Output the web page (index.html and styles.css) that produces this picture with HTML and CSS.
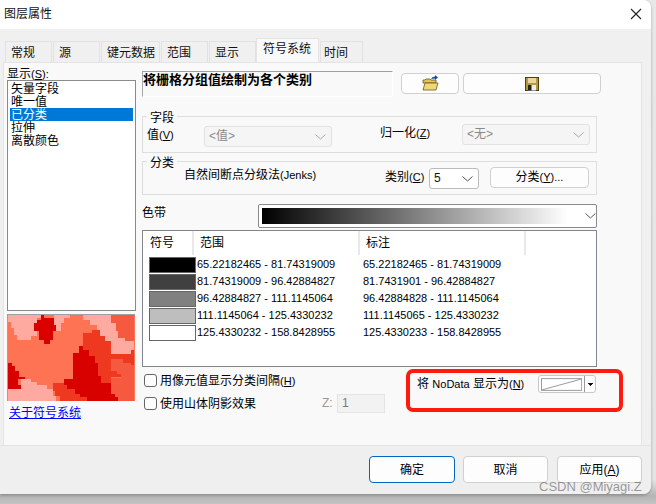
FILE: index.html
```html
<!DOCTYPE html>
<html lang="zh">
<head>
<meta charset="utf-8">
<title>图层属性</title>
<link rel="stylesheet" href="styles.css">
</head>
<body>
<div class="dialog">
  <header class="titlebar">
    <span>图层属性</span>
    <svg class="close" width="12" height="12" viewBox="0 0 12 12"><path d="M1 1L11 11M11 1L1 11" stroke="#222" stroke-width="1.1" fill="none"/></svg>
  </header>
  <nav class="tabs">
    <span class="tab w47">常规</span><span class="tab w47">源</span><span class="tab w59">键元数据</span><span class="tab w47">范围</span><span class="tab w47">显示</span><span class="tab active">符号系统</span><span class="tab w43">时间</span>
  </nav>
  <main class="panel">
    <aside class="left">
      <div class="show-label">显示<span class="lat">(<u>S</u>):</span></div>
      <div class="listbox">
        <div class="item">矢量字段</div>
        <div class="item">唯一值</div>
        <div class="item selected">已分类</div>
        <div class="item">拉伸</div>
        <div class="item">离散颜色</div>
      </div>
      <svg class="preview" width="128" height="87" viewBox="22 45 384 261" shape-rendering="crispEdges">
        <rect x="22" y="45" width="384" height="261" fill="#ff7355"/>
        <path fill="#ffaaa0" d="M22 45H120V55H110V70H100V95H110V110H90V120H50V105H40V85H30V65H22Z"/>
        <path fill="#ffaaa0" d="M160 45H210V55H190V70H182V95H168V75H160Z"/>
        <path fill="#ffaaa0" d="M22 270H62V258H60V240H90V248H110V258H140V270H158V290H168V305H22Z"/>
        <path fill="#ffaaa0" d="M250 45H335V70H348V95H355V115H375V125H405V155H395V162H335V125H315V110H300V92H290V75H270V60H250Z"/>
        <path fill="#f55a40" d="M335 45H405V125H375V115H355V95H348V70H335Z"/>
        <path fill="#f55a40" d="M335 170H365V180H395V198H405V305H355V295H345V285H335V235H365V225H352V215H335Z"/>
        <path fill="#ee3820" d="M250 100H275V92H300V110H315V125H335V215H352V225H365V232H335V285H305V250H295V190H285V170H268V150H250Z"/>
        <path fill="#ee3820" d="M335 162H395V152H405V198H395V190H370V180H335Z"/>
        <path fill="#ee3820" d="M158 250H190V258H200V270H225V285H240V295H260V305H180V290H165V275H158Z"/>
        <path fill="#d90000" d="M120 45H130V55H160V75H168V95H158V120H150V132H130V120H115V95H100V70H110V60H120Z"/>
        <path fill="#d90000" d="M250 130V150H268V170H285V190H295V230H305V250H335V285H345V295H355V305H260V295H240V285H225V270H200V258H190V240H218V160H237V140H250Z"/>
        <path fill="#d90000" d="M22 192H32V200H42V215H55V232H72V240H52V258H62V270H22Z"/>
      </svg>
      <a class="about" href="#">关于符号系统</a>
    </aside>
    <section class="right">
      <div class="top-row">
        <div class="desc">将栅格分组值绘制为各个类别</div>
        <button class="btn btn-open">
          <svg width="17" height="17" viewBox="0 0 17 17"><path d="M1 5H3L4 4H8L9 5H14V8H1Z" fill="#e3c35c" stroke="#6a5520" stroke-width=".8"/><path d="M1 15L3 8H16L14 15Z" fill="#f0d878" stroke="#6a5520" stroke-width=".8"/><path d="M9 4Q10 1.500 13 1.500V0L16 2.500L13 5V3.500Q11 3.500 9 4Z" fill="#0b4f9e"/></svg>
        </button>
        <button class="btn btn-save">
          <svg width="14" height="14" viewBox="0 0 14 14"><rect x=".5" y=".5" width="13" height="13" fill="#b59a3c" stroke="#4a3d18"/><rect x="3" y="1" width="8" height="5" fill="#e8d89a"/><rect x="3" y="8" width="8" height="5.500" fill="#eee"/><rect x="3" y="8" width="3.500" height="5.500" fill="#222"/></svg>
        </button>
      </div>
      <div class="group group-field">
        <span class="legend">字段</span>
        <span class="lbl lbl-value">值<span class="lat">(<u>V</u>)</span></span>
        <div class="select sel-value"><span>&lt;值&gt;</span><svg class="chev" width="11" height="6" viewBox="0 0 11 6"><path d="M.5 .5L5.500 5L10.500 .5" fill="none" stroke="#a8a8a8"/></svg></div>
        <span class="lbl lbl-norm">归一化<span class="lat">(<u>Z</u>)</span></span>
        <div class="select sel-norm"><span>&lt;无&gt;</span><svg class="chev" width="11" height="6" viewBox="0 0 11 6"><path d="M.5 .5L5.500 5L10.500 .5" fill="none" stroke="#a8a8a8"/></svg></div>
      </div>
      <div class="group group-class">
        <span class="legend">分类</span>
        <span class="lbl lbl-method">自然间断点分级法<span class="lat">(Jenks)</span></span>
        <span class="lbl lbl-count">类别<span class="lat">(<u>C</u>)</span></span>
        <div class="select sel-count"><span>5</span><svg class="chev" width="11" height="6" viewBox="0 0 11 6"><path d="M.5 .5L5.500 5L10.500 .5" fill="none" stroke="#555"/></svg></div>
        <button class="btn btn-classify">分类<span class="lat">(<u>Y</u>)...</span></button>
      </div>
      <div class="ramp-row">
        <span class="ramp-label">色带</span>
        <div class="ramp">
          <div class="gradient"></div>
          <svg class="chev" width="11" height="6" viewBox="0 0 11 6"><path d="M.5 .5L5.500 5L10.500 .5" fill="none" stroke="#555"/></svg>
        </div>
      </div>
      <div class="table">
        <div class="thead">
          <span class="th th-sym">符号</span><span class="th th-range">范围</span><span class="th th-label">标注</span><span class="th th-rest"></span>
        </div>
        <div class="trow"><i class="swatch s1"></i><span class="range">65.22182465 - 81.74319009</span><span>65.22182465 - 81.74319009</span></div>
        <div class="trow"><i class="swatch s2"></i><span class="range">81.74319009 - 96.42884827</span><span>81.7431901 - 96.42884827</span></div>
        <div class="trow"><i class="swatch s3"></i><span class="range">96.42884827 - 111.1145064</span><span>96.42884828 - 111.1145064</span></div>
        <div class="trow"><i class="swatch s4"></i><span class="range">111.1145064 - 125.4330232</span><span>111.1145065 - 125.4330232</span></div>
        <div class="trow"><i class="swatch s5"></i><span class="range">125.4330232 - 158.8428955</span><span>125.4330233 - 158.8428955</span></div>
      </div>
      <div class="bottom-row">
        <div class="checks">
          <label class="check"><input type="checkbox"><span>用像元值显示分类间隔<span class="lat">(<u>H</u>)</span></span></label>
          <div class="check-line">
            <label class="check"><input type="checkbox"><span>使用山体阴影效果</span></label>
            <span class="z-label">Z:</span>
            <span class="z-input">1</span>
          </div>
        </div>
        <div class="nodata">
          <span class="nodata-text">将 <span class="lat">NoData</span> 显示为<span class="lat">(<u>N</u>)</span></span>
          <div class="nodata-btn">
            <svg width="42" height="13" viewBox="0 0 42 13"><rect x=".5" y=".5" width="41" height="12" fill="#fff" stroke="#9a9a9a"/><path d="M1 12L41 1" stroke="#9a9a9a" fill="none"/></svg>
            <span class="nodata-arrow"></span>
          </div>
        </div>
      </div>
    </section>
  </main>
  <footer class="footer">
    <button class="btn fbtn primary">确定</button>
    <button class="btn fbtn">取消</button>
    <button class="btn fbtn">应用<span>(<u>A</u>)</span></button>
  </footer>
  <div class="highlight"></div>
</div>
<div class="watermark">CSDN @Miyagi.Z</div>
</body>
</html>
```
FILE: styles.css
```css
* { box-sizing: border-box; }
html, body { margin: 0; padding: 0; }
body {
  width: 656px;
  height: 504px;
  overflow: hidden;
  position: relative;
  background: linear-gradient(#e8e8e8 0, #e4e4e4 480px, #b4b4b4 496px, #c4c4c4 504px);
  font: 12px/13px "Liberation Sans", "Noto Sans CJK SC", sans-serif;
  color: #000;
}
u { text-decoration: underline; }
.lat { font-size: 11px; }
.dialog {
  position: relative;
  width: 651px;
  height: 494px;
  background: #f0f0f0;
  border-radius: 0 8px 8px 0;
  overflow: hidden;
  box-shadow: 0 1px 3px rgba(0,0,0,.3);
}
.titlebar {
  height: 29px;
  background: #fff;
  display: flex;
  justify-content: space-between;
  align-items: center;
  padding: 0 9px 1px 4px;
  color: #111;
}
.close { display: block; }
.tabs {
  height: 33px;
  display: flex;
  align-items: flex-end;
  padding-left: 5px;
}
.tab {
  height: 21px;
  background: #f0f0f0;
  border: 1px solid #e2e2e2;
  border-bottom: 0;
  margin-right: 1px;
  display: flex;
  align-items: center;
  padding: 2px 0 0 5px;
  color: #111;
}
.w47 { width: 47px; }
.w59 { width: 59px; padding-left: 5px; }
.w43 { width: 43px; margin-left: 1px; padding-left: 3px; }
.tab.active {
  width: 63px;
  height: 24px;
  background: #f9f9f9;
  margin-right: 0;
  margin-left: -1px;
  padding: 0 0 2px 6px;
  border-color: #e4e4e4;
}
.panel {
  margin-left: 3px;
  width: 639px;
  height: 383px;
  background: #f9f9f9;
  border: 1px solid #e4e4e4;
  border-bottom: 0;
  display: flex;
  padding-left: 3px;
}
.left {
  width: 129px;
  flex: none;
  display: flex;
  flex-direction: column;
}
.show-label { height: 17px; padding-top: 5px; }
.listbox {
  height: 231px;
  background: #fff;
  border: 1px solid #8a8a8a;
  padding: 1px 2px;
}
.item { height: 13px; padding: 1px 0 0 1px; }
.item.selected { background: #0078d7; color: #fff; }
.preview {
  display: block;
  margin-top: 3px;
  border-top: 1px solid #a0a0a0;
  border-left: 1px solid #a0a0a0;
}
.about { margin-top: 6px; margin-left: 2px; color: #0000ff; text-decoration: underline; }
.right {
  width: 455px;
  margin-left: 6px;
  flex: none;
}
.top-row { display: flex; padding-top: 8px; height: 34px; }
.desc {
  width: 251px;
  height: 26px;
  flex: none;
  border-top: 1px solid #a0a0a0;
  border-left: 1px solid #a8a8a8;
  border-right: 1px solid #fff;
  border-bottom: 1px solid #fff;
  font-size: 13px;
  font-weight: bold;
  line-height: 14px;
  padding-top: 1px;
}
.btn {
  background: #fdfdfd;
  border: 1px solid #d0d0d0;
  border-radius: 4px;
  font: inherit;
  color: inherit;
  padding: 0;
  display: flex;
  align-items: center;
  justify-content: center;
  flex: none;
}
.btn-open { width: 58px; height: 21px; margin: 2px 0 0 8px; }
.btn-save { width: 138px; height: 21px; margin: 2px 0 0 4px; }
.group {
  position: relative;
  border: 1px solid #dedede;
  width: 455px;
  display: flex;
  align-items: flex-start;
}
.group-field { height: 37px; margin-top: 19px; }
.group-class { height: 34px; margin-top: 8px; }
.legend {
  position: absolute;
  left: 4px;
  top: -6px;
  padding: 0 3px;
  background: #f9f9f9;
  height: 14px;
  line-height: 14px;
}
.select {
  height: 21px;
  border: 1px solid #e2e2e2;
  border-radius: 3px;
  background: #f5f5f5;
  color: #8a8a8a;
  display: flex;
  align-items: center;
  justify-content: space-between;
  padding: 0 5px 0 4px;
}
.lbl-value { margin: 12px 0 0 4px; width: 57px; }
.sel-value { width: 128px; margin-top: 9px; }
.lbl-norm { margin: 10px 0 0 48px; width: 82px; }
.sel-norm { width: 128px; margin-top: 7px; }
.lbl-method { margin: 7px 0 0 41px; width: 201px; }
.lbl-count { margin: 9px 0 0 0; width: 44px; }
.sel-count { width: 50px; margin-top: 6px; background: #fff; color: #111; border-color: #bbb; }
.btn-classify { width: 99px; height: 21px; margin: 5px 0 0 11px; }
.ramp-row { display: flex; height: 24px; margin-top: 9px; }
.ramp-label { width: 116px; padding-top: 3px; }
.ramp {
  width: 339px;
  height: 24px;
  background: #fff;
  border: 1px solid #8a8a8a;
  border-radius: 2px;
  padding: 3px 0 3px 3px;
  display: flex;
  align-items: center;
}
.gradient { width: 310px; height: 16px; background: linear-gradient(90deg, #000, #fff); }
.ramp .chev { margin-left: 17px; }
.table {
  margin-top: 2px;
  width: 455px;
  height: 137px;
  background: #fff;
  border: 1px solid #80868c;
  font-size: 11px;
}
.thead { display: flex; height: 25px; padding-bottom: 1px; font-size: 12px; }
.th {
  display: flex;
  align-items: center;
  border-right: 2px solid #e8e8e8;
  padding: 1px 0 0 6px;
  flex: none;
}
.th-sym { width: 51px; padding-left: 7px; }
.th-range { width: 166px; }
.th-label { width: 166px; }
.th-rest { border: 0; }
.trow {
  display: flex;
  align-items: center;
  height: 17px;
  padding-left: 6px;
  white-space: nowrap;
}
.swatch { display: block; width: 47px; height: 16px; border: 1px solid #666; flex: none; }
.s1 { background: #000; }
.s2 { background: #404040; }
.s3 { background: #808080; }
.s4 { background: #bebebe; }
.s5 { background: #fff; }
.range { width: 166px; flex: none; margin-left: 1px; }
.bottom-row { display: flex; padding-top: 7px; position: relative; }
.checks { width: 244px; margin-left: 2px; flex: none; }
.check { display: flex; align-items: center; height: 13px; }
.check > span { padding-top: 1px; }
.check input {
  appearance: none;
  width: 13px;
  height: 13px;
  margin: 0 3px 0 0;
  border: 1px solid #666;
  border-radius: 3px;
  background: #fdfdfd;
}
.check-line { display: flex; align-items: center; height: 19px; margin-top: 7px; }
.check-line .check { width: 178px; }
.z-label { color: #999; width: 15px; }
.z-input {
  width: 48px;
  height: 19px;
  background: #f2f2f2;
  border: 1px solid #e4e4e4;
  color: #778;
  padding: 2px 0 0 4px;
}
.nodata { display: flex; margin-left: 29px; align-items: flex-start; }
.nodata-text { width: 121px; padding-top: 4px; }
.nodata-btn {
  width: 58px;
  height: 18px;
  margin-top: 1px;
  border: 1px solid #c8c8c8;
  border-radius: 3px;
  background: #fdfdfd;
  display: flex;
  align-items: center;
  padding-left: 2px;
  flex: none;
}
.nodata-arrow {
  display: block;
  width: 11px;
  height: 16px;
  margin-left: 2px;
  border-left: 1px solid #999;
  background: linear-gradient(#111, #111) center 7px / 5px 1px no-repeat,
              linear-gradient(#111, #111) center 8px / 3px 1px no-repeat,
              linear-gradient(#111, #111) center 9px / 1px 1px no-repeat;
}
.footer {
  height: 49px;
  border-top: 1px solid #e4e4e4;
  background: #efefef;
  display: flex;
  padding: 10px 0 0 369px;
}
.fbtn { width: 85px; height: 27px; margin-right: 9px; padding-top: 2px; }
.fbtn.primary { width: 86px; border: 1px solid #0067c0; margin-right: 8px; }
.highlight {
  position: absolute;
  left: 406px;
  top: 369px;
  width: 217px;
  height: 43px;
  border: 4px solid #ff1a10;
  border-radius: 7px;
}
.watermark {
  position: absolute;
  left: 539px;
  top: 478px;
  font-size: 13px;
  line-height: 17px;
  color: rgba(90,90,90,.6);
  white-space: nowrap;
}
```
